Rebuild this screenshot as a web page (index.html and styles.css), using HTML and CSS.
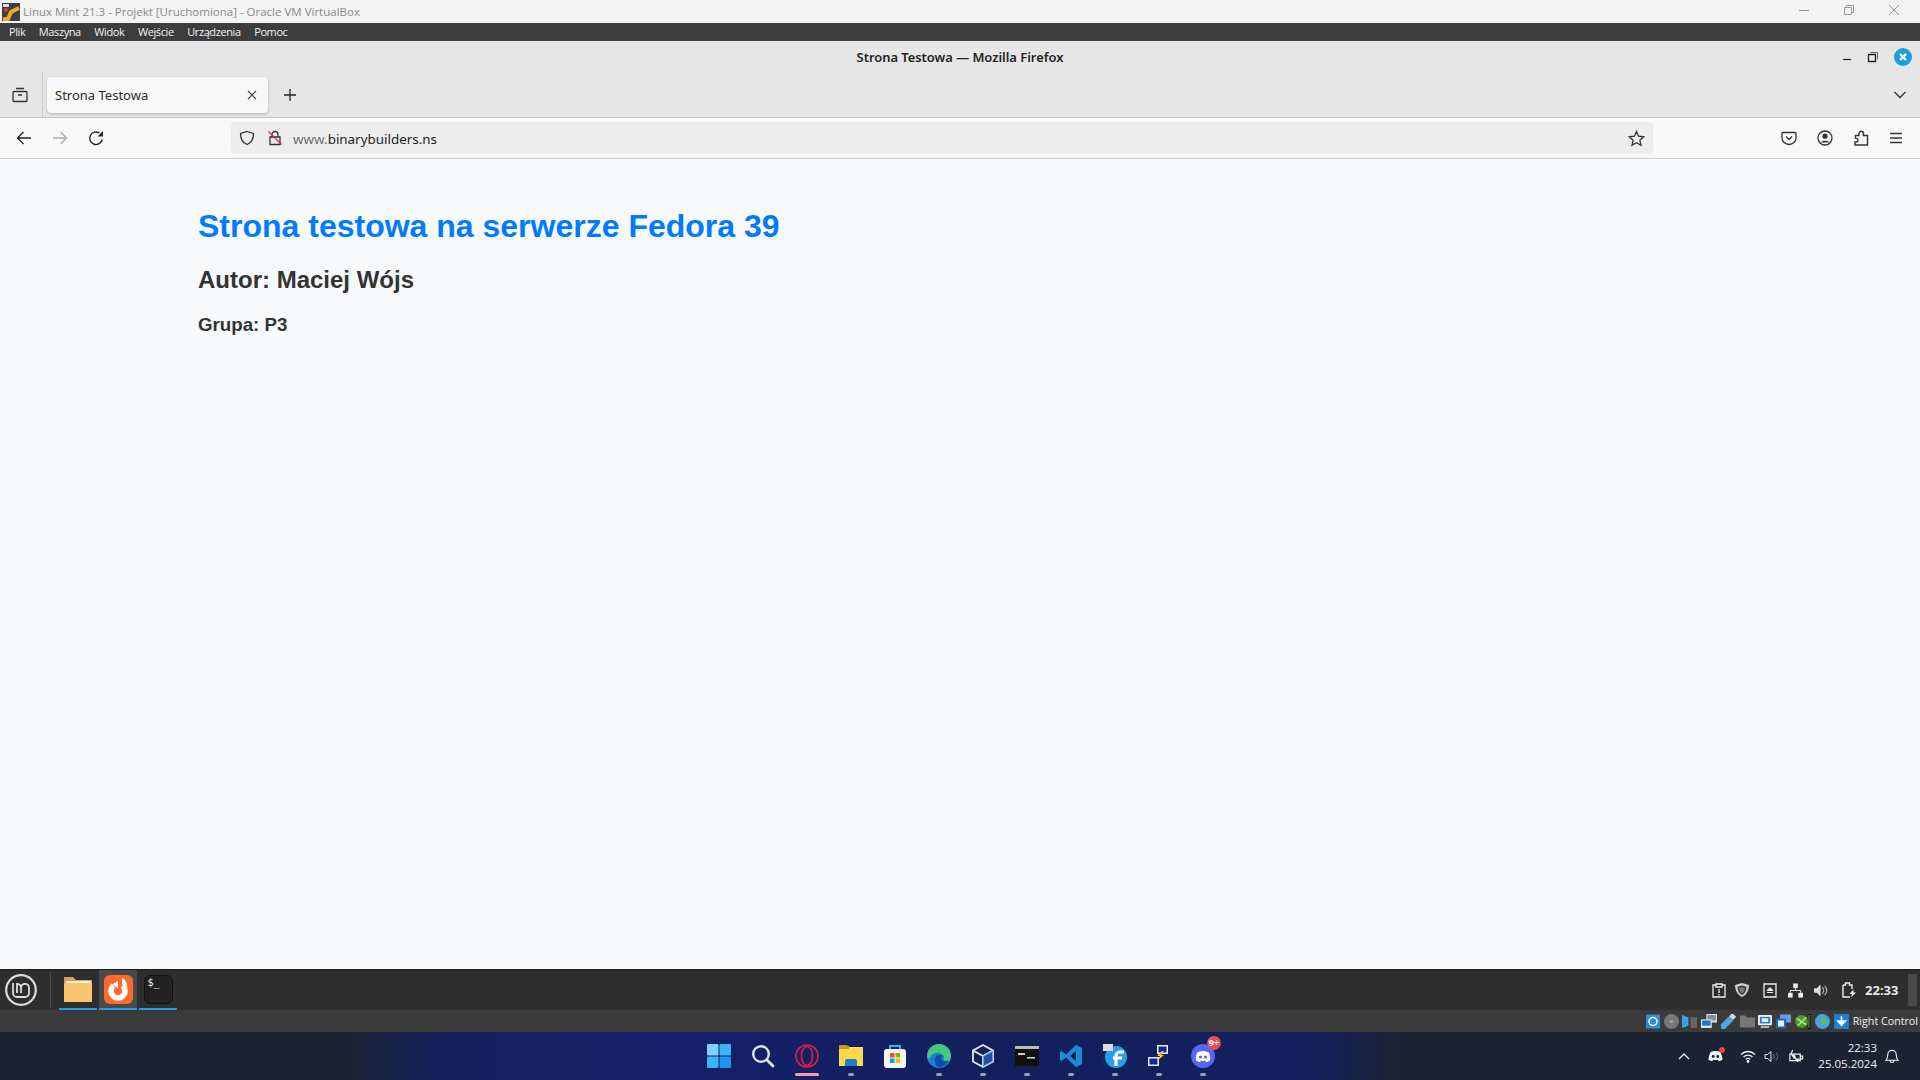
FILE: index.html
```html
<!DOCTYPE html>
<html lang="pl">
<head>
<meta charset="utf-8">
<title>Strona Testowa</title>
<link rel="stylesheet" href="styles.css">
</head>
<body>
<div class="vm-title">
  <div class="vm-left">
    <svg class="vm-logo" width="18" height="18" viewBox="0 0 18 18"><rect width="18" height="18" fill="#3b3f46"/><rect x="1" y="1" width="6" height="3" fill="#ddd"/><path d="M1 16 L6 16 L9 9 L17 5" stroke="#f4a52c" stroke-width="4" fill="none"/><circle cx="4" cy="7" r="2" fill="#d8442c"/></svg>
    <span>Linux Mint 21.3 - Projekt [Uruchomiona] - Oracle VM VirtualBox</span>
  </div>
  <div class="vm-controls">
    <svg width="12" height="12" viewBox="0 0 12 12"><path d="M1 6.500H11" stroke="#999" fill="none"/></svg>
    <svg width="12" height="12" viewBox="0 0 12 12"><path d="M1.500 3.500h7v7h-7zM3.500 3.500v-2h7v7h-2" stroke="#999" fill="none"/></svg>
    <svg width="12" height="12" viewBox="0 0 12 12"><path d="M1 1L11 11M11 1L1 11" stroke="#999" fill="none"/></svg>
  </div>
</div>
<div class="vm-menu">
  <span>Plik</span><span>Maszyna</span><span>Widok</span><span>Wejście</span><span>Urządzenia</span><span>Pomoc</span>
</div>

<div class="ff-title">
  <span class="ff-title-text">Strona Testowa — Mozilla Firefox</span>
  <div class="ff-controls">
    <svg width="10" height="10" viewBox="0 0 10 10"><path d="M1 7.500H9" stroke="#222" stroke-width="1.200"/></svg>
    <svg width="12" height="12" viewBox="0 0 12 12"><path d="M1.500 3.500h7v7h-7z" stroke="#222" stroke-width="1.300" fill="none"/><path d="M3.500 1.500h7v7" stroke="#666" fill="none"/></svg>
    <svg width="18" height="18" viewBox="0 0 18 18"><circle cx="9" cy="9" r="9" fill="#1f9ede"/><path d="M6 6L12 12M12 6L6 12" stroke="#fff" stroke-width="2.200"/></svg>
  </div>
</div>
<div class="ff-tabs">
  <div class="tab-side">
    <svg width="16" height="16" viewBox="0 0 16 16" fill="none" stroke="#333" stroke-width="1.300"><path d="M4 1.500h8M1 5.500a1 1 0 0 1 1-1h12a1 1 0 0 1 1 1v8a1 1 0 0 1-1 1H2a1 1 0 0 1-1-1zM6 8h4"/></svg>
  </div>
  <div class="tab">
    <span>Strona Testowa</span>
    <svg width="10" height="10" viewBox="0 0 10 10"><path d="M1 1L9 9M9 1L1 9" stroke="#444" fill="none" stroke-width="1.100"/></svg>
  </div>
  <svg class="tab-new" width="14" height="14" viewBox="0 0 14 14"><path d="M7 1V13M1 7H13" stroke="#222" stroke-width="1.300"/></svg>
  <svg class="tab-list" width="14" height="10" viewBox="0 0 14 10"><path d="M1.500 2L7 7.500L12.500 2" stroke="#333" stroke-width="1.300" fill="none"/></svg>
</div>
<div class="ff-toolbar">
  <div class="nav">
    <svg width="16" height="16" viewBox="0 0 16 16" fill="none" stroke="#222" stroke-width="1.300"><path d="M15 8H1.500M7.500 2L1.500 8L7.500 14"/></svg>
    <svg width="16" height="16" viewBox="0 0 16 16" fill="none" stroke="#aaa" stroke-width="1.300"><path d="M1 8H14.500M8.500 2L14.500 8L8.500 14"/></svg>
    <svg width="16" height="16" viewBox="0 0 16 16" fill="none" stroke="#222" stroke-width="1.400"><path d="M14.200 9.500A6.300 6.300 0 1 1 11.500 3"/><path d="M15 1V6.500H9.500Z" fill="#222" stroke="none"/></svg>
  </div>
  <div class="urlbar">
    <svg width="16" height="16" viewBox="0 0 16 16" fill="none" stroke="#333" stroke-width="1.300"><path d="M8 1.500L14.500 3.500C14.500 9 12 13 8 14.500C4 13 1.500 9 1.500 3.500Z"/></svg>
    <svg width="16" height="16" viewBox="0 0 16 16" fill="none" stroke="#333" stroke-width="1.300"><path d="M5 7V4.500a3 3 0 0 1 6 0V7M3 7h10v7.500H3z"/><path d="M1.500 1.500L14.500 14.500" stroke="#e0245e"/></svg>
    <div class="url"><span class="url-dim">www.</span>binarybuilders.ns</div>
    <svg class="url-star" width="17" height="17" viewBox="0 0 17 17" fill="none" stroke="#333" stroke-width="1.300"><path d="M8.500 1.500L10.600 6.200L15.800 6.800L11.900 10.200L13 15.300L8.500 12.700L4 15.300L5.100 10.200L1.200 6.800L6.400 6.200Z"/></svg>
  </div>
  <div class="tools">
    <svg width="16" height="16" viewBox="0 0 16 16" fill="none" stroke="#333" stroke-width="1.300"><path d="M2 2.500h12a1 1 0 0 1 1 1V8a7 6.500 0 0 1-14 0V3.500a1 1 0 0 1 1-1z"/><path d="M5 6.500L8 9.500L11 6.500"/></svg>
    <svg width="16" height="16" viewBox="0 0 16 16" fill="none" stroke="#333" stroke-width="1.300"><circle cx="8" cy="8" r="7"/><circle cx="8" cy="6.200" r="2.600" fill="#333" stroke="none"/><path d="M3.500 12.500C5 10 11 10 12.500 12.500Z" fill="#333" stroke="none"/></svg>
    <svg width="16" height="16" viewBox="0 0 16 16" fill="none" stroke="#333" stroke-width="1.400"><path d="M2.500 5.500H6V3.500a2.200 2.200 0 0 1 4.400 0V5.500H14.500V15H2V12H3.200a1.800 1.800 0 0 0 0-3.600H2.500z"/></svg>
    <svg width="14" height="14" viewBox="0 0 14 14" stroke="#333" stroke-width="1.300"><path d="M1 2.500H13M1 7H13M1 11.500H13"/></svg>
  </div>
</div>

<main class="content">
  <h1>Strona testowa na serwerze Fedora 39</h1>
  <h2>Autor: Maciej Wójs</h2>
  <h3>Grupa: P3</h3>
</main>

<div class="mint-panel">
  <svg class="mint-logo" width="32" height="32" viewBox="0 0 32 32" fill="none" stroke="#ddd"><circle cx="16" cy="16" r="14.800" stroke-width="2.200"/><path d="M8 9v10a4 4 0 0 0 4 4h8a4 4 0 0 0 4-4v-6a3.500 3.500 0 0 0-4-3 3.500 3.500 0 0 0-4 3v6M16 13a3.500 3.500 0 0 0-4-3M12 9v10" stroke-width="1.800"/></svg>
  <div class="mint-sep"></div>
  <div class="mint-app">
    <svg width="30" height="27" viewBox="0 0 30 27"><path d="M1 1h9l3 3h16v21a1 1 0 0 1-1 1H2a1 1 0 0 1-1-1z" fill="#d9a24e"/><rect x="3" y="5" width="25" height="3" fill="#eee"/><rect x="1" y="7" width="28" height="19" rx="1" fill="#f8c56d"/></svg>
  </div>
  <div class="mint-app mint-active">
    <svg width="29" height="29" viewBox="0 0 29 29"><rect width="29" height="29" rx="6" fill="#fc6a30"/><circle cx="14" cy="16" r="7" fill="none" stroke="#fff" stroke-width="5.500" stroke-dasharray="34 10" transform="rotate(-50 14 16)"/><path d="M14 6L8 9.500L14 13Z" fill="#fff"/><path d="M18 3c4 2 6 6 5 11l-5-5z" fill="#fff"/></svg>
  </div>
  <div class="mint-app">
    <div class="term"><span>$_</span></div>
  </div>
  <div class="mint-tray">
    <svg width="14" height="15" viewBox="0 0 14 15" fill="none" stroke="#eee" stroke-width="1.300"><path d="M4 2H1v12h12V2h-3M4 1h6v3H4zM7 6v4M7 11v1.500"/></svg>
    <svg class="mint-shield" width="16" height="16" viewBox="0 0 16 16" fill="#ccc"><path d="M8 1l7 2c0 6-3 10-7 12C4 13 1 9 1 3z"/><path d="M8 3.500l4.500 1.200c0 4-2 7-4.500 8.300-2.500-1.300-4.500-4.300-4.500-8.300z" fill="#333"/><path d="M8 5l3 1c0 2.500-1.200 4.500-3 5.500-1.800-1-3-3-3-5.500z" fill="#777"/></svg>
    <svg width="14" height="15" viewBox="0 0 14 15" fill="none" stroke="#eee" stroke-width="1.300"><path d="M1 1h12v13H1z"/><path d="M4 9.500h6M4 7.500L7 4.500L10 7.500z" fill="#eee" stroke-width="1"/></svg>
    <svg width="15" height="15" viewBox="0 0 16 15" fill="#eee"><rect x="5.500" y="0" width="5" height="5"/><rect x="0" y="10" width="5" height="5"/><rect x="11" y="10" width="5" height="5"/><path d="M8 5v3M2.500 10V7.500h11V10" stroke="#eee" fill="none"/></svg>
    <svg class="mint-sound" width="15" height="15" viewBox="0 0 16 15" fill="none"><path d="M0 5h3l4-4v13l-4-4H0z" fill="#ddd"/><path d="M9 4c1.500 2 1.500 5 0 7M11.500 2.500c2.500 3 2.500 7 0 10" stroke="#aaa" stroke-width="1.300"/></svg>
    <svg class="mint-batt" width="14" height="16" viewBox="0 0 14 16" fill="none" stroke="#eee" stroke-width="1.400"><path d="M1 3h2.500V1h4v2H10v4M8 15H1V3"/><path d="M11.500 7.500l-4 4.500h2.500l-1 3.500 5-5h-2.500z" fill="#eee" stroke="none"/></svg>
    <span class="mint-clock">22:33</span>
    <div class="mint-show"></div>
  </div>
</div>

<div class="vm-status">
  <svg width="14" height="15" viewBox="0 0 14 14"><rect width="14" height="14" rx="1" fill="#2b8fd8"/><circle cx="7" cy="7" r="4" fill="none" stroke="#fff" stroke-width="1.500"/></svg>
  <svg width="15" height="15" viewBox="0 0 14 14"><circle cx="7" cy="7" r="7" fill="#777"/><circle cx="7" cy="7" r="1.500" fill="#aaa"/></svg>
  <svg width="15" height="15" viewBox="0 0 14 14"><path d="M0 1l6 2v8l-6 2z" fill="#36a3e6"/><rect x="8" y="3" width="6" height="10" fill="#666"/></svg>
  <svg width="16" height="15" viewBox="0 0 15 14"><rect x="5" y="0" width="10" height="8" fill="#ddd"/><rect x="6" y="1" width="8" height="5" fill="#7a8fa6"/><rect x="0" y="5" width="10" height="8" fill="#eee"/><rect x="1" y="6" width="8" height="5" fill="#2376c8"/></svg>
  <svg width="16" height="15" viewBox="0 0 14 14"><path d="M0 10L8 2l4 4-8 8H1z" fill="#4aa8ec"/><rect x="9" y="0" width="5" height="4" fill="#ddd" transform="rotate(45 11 2)"/></svg>
  <svg width="15" height="15" viewBox="0 0 15 14"><path d="M0 1h5l2 2h8v10H0z" fill="#777"/></svg>
  <svg width="14" height="15" viewBox="0 0 15 14"><rect width="15" height="11" rx="1" fill="#eee"/><rect x="2" y="2" width="11" height="7" fill="#1d7bd8"/><rect x="4" y="3.500" width="7" height="4" fill="#eee"/><rect x="3" y="12" width="9" height="2" fill="#bbb"/></svg>
  <svg width="15" height="15" viewBox="0 0 15 14"><rect x="4" y="0" width="11" height="8" fill="#6e9be0"/><rect x="0" y="4" width="10" height="10" fill="#1769c8"/><rect x="2" y="6" width="6" height="6" fill="#e8eef8"/></svg>
  <svg width="17" height="15" viewBox="0 0 15 14"><rect x="12.500" y="0" width="2.500" height="14" fill="#111"/><rect x="13" y="1" width="1" height="12" fill="#6a9a3c"/><circle cx="6.500" cy="7" r="6" fill="#4a9a2c"/><path d="M2 4l9 6M11 3L3 11" stroke="#b4e07a" stroke-width="1.500"/></svg>
  <svg width="16" height="15" viewBox="0 0 15 14"><circle cx="7" cy="7" r="7" fill="#4aa0e0"/><path d="M6 3l7 4-7 4z" fill="#5cc24a"/></svg>
  <svg width="15" height="15" viewBox="0 0 14 14"><rect width="14" height="14" rx="1" fill="#1e7fd8"/><path d="M7 2v7M3.500 6.500L7 10.500l3.500-4z" fill="#fff" stroke="#fff" stroke-width="1.500"/></svg>
  <span class="status-key">Right Control</span>
</div>

<div class="win-bar">
  <div class="win-icons">
    <div class="win-item"><svg width="24" height="24" viewBox="0 0 24 24"><rect x="0" y="0" width="11.500" height="11.500" rx="1" fill="#7ed2fb"/><rect x="12.500" y="0" width="11.500" height="11.500" rx="1" fill="#3eb2f3"/><rect x="0" y="12.500" width="11.500" height="11.500" rx="1" fill="#3eb2f3"/><rect x="12.500" y="12.500" width="11.500" height="11.500" rx="1" fill="#1b96ee"/></svg></div>
    <div class="win-item"><svg width="24" height="24" viewBox="0 0 24 24" fill="none"><circle cx="10" cy="10" r="7.800" stroke="#dfe3ea" stroke-width="2.400"/><path d="M16 16L22 22" stroke="#dfe3ea" stroke-width="2.800" stroke-linecap="round"/></svg></div>
    <div class="win-item"><svg width="24" height="24" viewBox="0 0 24 24" fill="none" stroke="#d31e45" stroke-width="1.700"><circle cx="12" cy="12" r="11"/><ellipse cx="12" cy="12" rx="5.500" ry="9.500"/></svg><i class="win-dot win-dot-long"></i></div>
    <div class="win-item"><svg width="24" height="24" viewBox="0 0 24 24"><path d="M0 1h8l2 2h-10z" fill="#b98a16"/><rect y="3" width="24" height="19" fill="#ffd74a"/><path d="M6 22v-5a2 2 0 0 1 2-2h8a2 2 0 0 1 2 2v5z" fill="#1c7fcc"/><rect x="0" y="2" width="10" height="3" fill="#c89a1d"/></svg><i class="win-dot"></i></div>
    <div class="win-item"><svg width="24" height="24" viewBox="0 0 24 24"><path d="M7 6V2h10v4" fill="none" stroke="#2eb4ee" stroke-width="2"/><rect x="1" y="5" width="22" height="19" rx="3" fill="#f6f6f6"/><rect x="7" y="9" width="4.500" height="4.500" fill="#f25022"/><rect x="12.500" y="9" width="4.500" height="4.500" fill="#7fba00"/><rect x="7" y="14.500" width="4.500" height="4.500" fill="#00a4ef"/><rect x="12.500" y="14.500" width="4.500" height="4.500" fill="#ffb900"/></svg></div>
    <div class="win-item"><svg width="24" height="24" viewBox="0 0 24 24"><circle cx="12" cy="12" r="12" fill="#1a7fd0"/><path d="M12 0A12 12 0 0 1 24 12C24 17 20 19 16 17C19 12 14 8 9 9C5 10 3 13 1 16C-2 8 4 0 12 0Z" fill="#45c87a"/><path d="M8 15c0-4 5-5 8-3-2 1-3 2-1 4 3 2 6 1 7-1-2 6-8 9-11 8-2-1-3-4-3-8z" fill="#0b4ea2"/></svg><i class="win-dot"></i></div>
    <div class="win-item"><svg width="24" height="24" viewBox="0 0 24 24" fill="none" stroke="#e4e8ee" stroke-width="1.800"><path d="M12 1L22 6.500V17.500L12 23L2 17.500V6.500Z"/><path d="M2 6.500L12 12L22 6.500M12 12V23"/><path d="M12 12L22 6.500V17.500L12 23Z" fill="#2878c8" stroke="none" opacity=".6"/></svg><i class="win-dot"></i></div>
    <div class="win-item"><svg width="24" height="20" viewBox="0 0 24 20"><rect width="24" height="20" fill="#111"/><rect width="24" height="3" fill="#bbb"/><rect x="3" y="7" width="7" height="2" fill="#ccc"/><rect x="12" y="11" width="8" height="1.500" fill="#ddd"/></svg><i class="win-dot"></i></div>
    <div class="win-item"><svg width="24" height="24" viewBox="0 0 24 24"><path d="M17 1L23 4V20L17 23L7 13.500L2.500 17L1 16V8L2.500 7L7 10.500Z" fill="#1c8cd8"/><path d="M17 7V17L11 12Z" fill="#0b1c5a"/></svg><i class="win-dot"></i></div>
    <div class="win-item"><svg width="24" height="24" viewBox="0 0 24 24"><rect width="24" height="24" fill="#0c2a5c"/><circle cx="13" cy="13" r="11" fill="#2a9cee"/><path d="M13 22V12a4 4 0 0 1 4-4h4M10 14h9" stroke="#fff" stroke-width="3.200" fill="none"/><rect width="10" height="7" fill="#ddd"/></svg><i class="win-dot"></i></div>
    <div class="win-item"><svg width="24" height="24" viewBox="0 0 24 24"><rect x="10" y="1" width="11" height="9" fill="#eee"/><rect x="11.500" y="2.500" width="8" height="6" fill="#1322a8"/><rect x="1" y="13" width="11" height="9" fill="#eee"/><rect x="2.500" y="14.500" width="8" height="6" fill="#1322a8"/><path d="M15 7l-5 5h3l-3 5 7-6h-3l3-4z" fill="#ffd800"/></svg><i class="win-dot"></i></div>
    <div class="win-item"><svg width="24" height="24" viewBox="0 0 24 24"><circle cx="12" cy="12" r="12" fill="#5865f2"/><path d="M6 8.500c4-2 8-2 12 0 1 3 1.500 5.500 1 8-2 1.500-3 1.500-4 1.500l-1-1.500c-1.500.5-3 .5-4 0l-1 1.500c-1 0-2 0-4-1.500-.5-2.500 0-5 1-8z" fill="#fff"/><circle cx="9.500" cy="13" r="1.600" fill="#5865f2"/><circle cx="14.500" cy="13" r="1.600" fill="#5865f2"/></svg><b class="win-badge">9+</b><i class="win-dot"></i></div>
  </div>
  <div class="win-tray">
    <svg class="tray-caret" width="12" height="8" viewBox="0 0 12 8"><path d="M1 7L6 2L11 7" stroke="#eee" stroke-width="1.300" fill="none"/></svg>
    <div class="tray-disc"><svg width="15" height="12" viewBox="0 0 16 12"><path d="M3 1.500c3-1 7-1 10 0 1.500 3 2.500 6 2.500 8.500-1.500 1-3 1.500-4 1.500l-1-1.500c-1 .3-4 .3-5 0l-1 1.500c-1 0-2.500-.5-4-1.500C.5 7.500 1.500 4.500 3 1.500z" fill="#f4f4f4"/><circle cx="5.500" cy="6.500" r="1.500" fill="#1a2030"/><circle cx="10.500" cy="6.500" r="1.500" fill="#1a2030"/></svg><i></i></div>
    <svg width="16" height="13" viewBox="0 0 16 13" fill="none" stroke="#f0f0f0" stroke-width="1.300"><path d="M1 4.500C5 .5 11 .5 15 4.500M3.500 7C6 4.500 10 4.500 12.500 7M5.800 9.300C7 8 9 8 10.200 9.300"/><circle cx="8" cy="11.500" r=".8" fill="#f0f0f0"/></svg>
    <svg width="16" height="13" viewBox="0 0 16 13" fill="none" stroke="#e4e4e4"><path d="M1 4.500h2.500L7 1.500v10L3.500 8.500H1z"/><path d="M9.500 4c1 1.500 1 3.500 0 5M12 2.500c2 2.500 2 5.500 0 8" stroke="#777"/></svg>
    <svg width="16" height="15" viewBox="0 0 17 15" fill="none" stroke="#f0f0f0" stroke-width="1.300"><path d="M2 5h11v7H2zM13.500 7h2v3h-2"/><path d="M3 5l3 5h3l-2-5z" fill="#f0f0f0" stroke="none"/><path d="M5 0.500L3 5" /><path d="M10 13.500l-2-2a1.200 1.200 0 0 1 2-1.500 1.200 1.200 0 0 1 2 1.500z" fill="#f0f0f0" stroke="none"/></svg>
    <div class="tray-clock"><span>22:33</span><span>25.05.2024</span></div>
    <svg class="tray-bell" width="14" height="16" viewBox="0 0 15 16" fill="none" stroke="#eee" stroke-width="1.200"><path d="M1 12.500c1.500-1.500 2-3 2-6a4.500 4.500 0 0 1 9 0c0 3 .5 4.500 2 6zM5.500 13c0 2.500 4 2.500 4 0"/></svg>
  </div>
</div>
</body>
</html>
```

FILE: styles.css
```css
* { box-sizing: border-box; }
html, body { margin: 0; padding: 0; }
body {
  width: 1920px;
  height: 1080px;
  overflow: hidden;
  display: flex;
  flex-direction: column;
  font-family: "Noto Sans", sans-serif;
  background: #f8f9fa;
}
svg { display: block; flex: none; }

.vm-title {
  height: 23px;
  background: #f3f3f3;
  display: flex;
  align-items: center;
  justify-content: space-between;
  font: 11.5px "Open Sans", sans-serif;
  color: #8a8a8a;
}
.vm-left { display: flex; align-items: center; gap: 3px; padding-left: 2px; }
.vm-controls { display: flex; gap: 33px; padding-right: 20px; margin-top: -4px; }

.vm-menu {
  height: 18px;
  background: #3c3d3e;
  color: #f2f2f2;
  font: 11px/16px "Open Sans", sans-serif;
  letter-spacing: -.4px;
  display: flex;
  align-items: flex-start;
  gap: 13.5px;
  padding: 1px 0 0 9px;
}

.ff-title {
  height: 31px;
  background: #e6e6e6;
  display: flex;
  align-items: center;
  justify-content: center;
  position: relative;
}
.ff-title-text { font: 600 12.9px "Noto Sans", sans-serif; color: #222; }
.ff-controls {
  position: absolute;
  right: 8px;
  top: 7px;
  display: flex;
  align-items: center;
  gap: 15px;
}

.ff-tabs {
  height: 46px;
  background: #e6e6e6;
  border-bottom: 1px solid #c4c4c4;
  display: flex;
  align-items: flex-start;
}
.tab-side {
  width: 43px;
  height: 45px;
  padding: 15px 0 0 12px;
  border-right: 1px solid #c9c9c9;
}
.tab {
  width: 221px;
  height: 36px;
  margin: 5px 0 0 4px;
  padding: 0 11px 0 8px;
  background: #f8f8f8;
  border-radius: 4px;
  box-shadow: 0 1px 3px rgba(0,0,0,.25);
  display: flex;
  align-items: center;
  justify-content: space-between;
  font-size: 13px;
  color: #2b2b2b;
}
.tab-new { margin: 16px 0 0 15px; }
.tab-list { margin: 18px 13px 0 auto; }

.ff-toolbar {
  height: 41px;
  background: #f8f8f8;
  border-bottom: 1px solid #cfcfcf;
  display: flex;
  align-items: center;
}
.nav {
  display: flex;
  gap: 20px;
  padding-left: 16px;
  width: 231px;
}
.urlbar {
  width: 1422px;
  height: 32px;
  background: #ededed;
  border-radius: 4px;
  display: flex;
  align-items: center;
  gap: 12px;
  padding: 0 8px;
}
.url { flex: 1; font-size: 13.4px; color: #222; margin: 1px 0 0 -2px; }
.url-dim { color: #6e6e6e; }
.tools {
  display: flex;
  align-items: center;
  gap: 20px;
  padding-left: 128px;
}

.content {
  flex: 1;
  background: #f8f9fa;
  padding: 49px 0 0 198px;
  font-family: "Liberation Sans", sans-serif;
  font-weight: 700;
}
.content h1 { margin: 0; font-size: 32px; line-height: 37px; color: #007bff; }
.content h2 { margin: 21px 0 0; font-size: 24px; line-height: 28px; color: #333; }
.content h3 { margin: 20px 0 0; font-size: 18.72px; line-height: 21px; color: #333; }

.mint-panel {
  height: 41px;
  background: #2e2e2e;
  border-top: 1px solid #1c1c1c;
  display: flex;
  align-items: center;
}
.mint-logo { margin-left: 5px; }
.mint-sep { width: 1px; height: 38px; background: #4a4a4a; margin: 0 8px 0 13px; }
.mint-app {
  width: 38px;
  height: 40px;
  margin-right: 2px;
  display: flex;
  align-items: center;
  justify-content: center;
  border-bottom: 2px solid #1f9ede;
}
.mint-active { background: #4a4a4a; }
.term {
  width: 29px;
  height: 29px;
  border-radius: 6px;
  background: #222;
  border: 1px solid #111;
  color: #eee;
  font: 10px "DejaVu Sans Mono", monospace;
  padding: 1px 3px;
}
.mint-tray {
  margin-left: auto;
  display: flex;
  align-items: center;
  gap: 10.5px;
  padding-right: 3px;
}
.mint-shield { margin: 0 2.5px 0 -2.5px; }
.mint-sound { margin-left: 1px; }
.mint-batt { margin-left: 2px; }
.mint-clock {
  font: 700 13px "Noto Sans", sans-serif;
  color: #e8e8e8;
  margin-left: -1px;
}
.mint-show { width: 9px; height: 32px; background: #4a4a4a; margin-left: -1px; }

.vm-status {
  height: 22px;
  background: #3b3b3b;
  display: flex;
  align-items: center;
  justify-content: flex-end;
  gap: 3.5px;
  padding-right: 2px;
  font: 10.7px "Open Sans", sans-serif;
  color: #f2f2f2;
}
.status-key { white-space: nowrap; }

.win-bar {
  height: 48px;
  background: linear-gradient(90deg, #1b2333 0%, #1b2333 18%, #13225c 23%, #14206a 35%, #12205e 50%, #12205e 68%, #1b2333 73%, #1b2333 100%);
  display: flex;
  align-items: center;
  position: relative;
}
.win-icons {
  position: absolute;
  left: 697px;
  top: 0;
  display: flex;
}
.win-item {
  width: 44px;
  height: 48px;
  display: flex;
  align-items: center;
  justify-content: center;
  position: relative;
}
.win-dot {
  position: absolute;
  bottom: 4px;
  left: 19px;
  width: 6px;
  height: 3px;
  border-radius: 2px;
  background: #9aa3b5;
}
.win-dot-long { width: 24px; left: 10px; background: #ff9aa8; }
.win-badge {
  position: absolute;
  right: 4px;
  top: 4px;
  width: 14px;
  height: 14px;
  border-radius: 50%;
  background: #ee4b55;
  color: #fff;
  font: 700 9px/14px "Open Sans", sans-serif;
  text-align: center;
}
.win-tray {
  margin-left: auto;
  display: flex;
  align-items: center;
  gap: 8px;
  padding-right: 21px;
}
.tray-caret { margin-right: 10px; }
.tray-disc { position: relative; margin-right: 9px; }
.tray-disc i {
  position: absolute;
  top: -3px;
  right: -2px;
  width: 6px;
  height: 6px;
  border-radius: 50%;
  background: #ee4444;
}
.tray-clock {
  display: flex;
  flex-direction: column;
  align-items: flex-end;
  margin-left: 6.5px;
  font: 11.5px/16px "Open Sans", sans-serif;
  color: #f0f0f0;
}
```
